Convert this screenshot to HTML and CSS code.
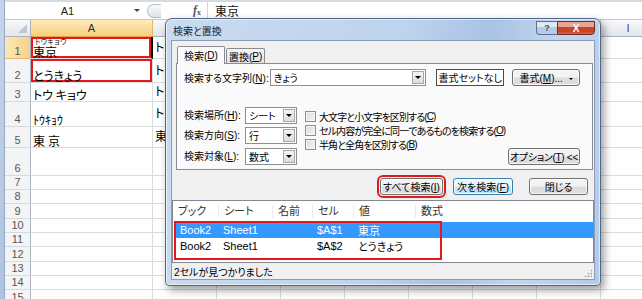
FILE: index.html
```html
<!DOCTYPE html>
<html lang="ja">
  <head>
    <meta charset="UTF-8" />
    <title>検索と置換</title>
    <link rel="stylesheet" href="styles.css">
  </head>
  <body>
    <div class="screen">
      <div class="frame-left"></div>
      <div class="excel">
        <div class="formula-bar">
          <div class="name-box"><span class="name">A1</span><span class="nb-arrow"></span></div>
          <div class="nb-grip"></div>
          <div class="fx"><i>f</i><small>x</small></div>
          <div class="formula">東京</div>
        </div>
        <div class="sheet">
          <div class="corner"></div>
          <div class="ch sel">A</div>
          <div class="ch">B</div>
          <div class="ch">C</div>
          <div class="ch">D</div>
          <div class="ch">E</div>
          <div class="ch">F</div>
          <div class="ch">G</div>
          <div class="ch">H</div>
          <div class="ch">I</div>

          <div class="rh sel">1</div>
          <div class="cell a active mark"><span class="kana">トウキョウ</span>東京</div>
          <div class="cell b">トウキョウ</div>
          <div class="rest"></div>

          <div class="rh">2</div>
          <div class="cell a mark">とうきょう</div>
          <div class="cell b">トウキョウ</div>
          <div class="rest"></div>

          <div class="rh">3</div>
          <div class="cell a">トウ キョウ</div>
          <div class="cell b">トウ キョウ</div>
          <div class="rest"></div>

          <div class="rh">4</div>
          <div class="cell a">ﾄｳｷｮｳ</div>
          <div class="cell b">トウキョウ</div>
          <div class="rest"></div>

          <div class="rh">5</div>
          <div class="cell a spaced">東京</div>
          <div class="cell b">東京</div>
          <div class="rest"></div>

          <div class="rh">6</div><div class="cell"></div><div class="cell"></div><div class="rest"></div>
          <div class="rh">7</div><div class="cell"></div><div class="cell"></div><div class="rest"></div>
          <div class="rh">8</div><div class="cell"></div><div class="cell"></div><div class="rest"></div>
          <div class="rh">9</div><div class="cell"></div><div class="cell"></div><div class="rest"></div>
          <div class="rh">10</div><div class="cell"></div><div class="cell"></div><div class="rest"></div>
          <div class="rh">11</div><div class="cell"></div><div class="cell"></div><div class="rest"></div>
          <div class="rh">12</div><div class="cell"></div><div class="cell"></div><div class="rest"></div>
          <div class="rh">13</div><div class="cell"></div><div class="cell"></div><div class="rest"></div>
          <div class="rh">14</div><div class="cell"></div><div class="cell"></div><div class="rest"></div>
          <div class="rh">15</div><div class="cell"></div><div class="cell"></div><div class="rest"></div>
        </div>
      </div>

      <div class="dialog">
        <div class="titlebar">
          <span class="title">検索と置換</span>
          <div class="caption-btns">
            <span class="help">?</span>
            <span class="close">X</span>
          </div>
        </div>
        <div class="client">
          <div class="tabs">
            <span class="tab active">検索(<u>D</u>)</span>
            <span class="tab">置換(<u>P</u>)</span>
          </div>
          <div class="panel">
            <div class="find-row">
              <label class="find-label">検索する文字列(<u>N</u>):</label>
              <div class="combo wide"><span class="value">きょう</span><b class="drop"></b></div>
              <div class="preview">書式セットなし</div>
              <button class="btn fmt">書式(<u>M</u>)... <span class="caret"></span></button>
            </div>
            <div class="opts">
              <div class="selects">
                <div class="sel-row">
                  <label>検索場所(<u>H</u>):</label>
                  <div class="combo"><span class="value">シート</span><b class="drop"></b></div>
                </div>
                <div class="sel-row">
                  <label>検索方向(<u>S</u>):</label>
                  <div class="combo"><span class="value">行</span><b class="drop"></b></div>
                </div>
                <div class="sel-row">
                  <label>検索対象(<u>L</u>):</label>
                  <div class="combo"><span class="value">数式</span><b class="drop"></b></div>
                </div>
              </div>
              <div class="checks">
                <label class="check"><i></i>大文字と小文字を区別する(<u>C</u>)</label>
                <label class="check"><i></i>セル内容が完全に同一であるものを検索する(<u>O</u>)</label>
                <label class="check"><i></i>半角と全角を区別する(<u>B</u>)</label>
              </div>
              <button class="btn options">オプション(<u>T</u>) &lt;&lt;</button>
            </div>
          </div>
          <div class="actions">
            <button class="btn find-all">すべて検索(<u>I</u>)</button>
            <button class="btn default find-next">次を検索(<u>F</u>)</button>
            <button class="btn close-btn">閉じる</button>
          </div>
          <div class="results">
            <div class="res-head">
              <span>ブック</span><span>シート</span><span>名前</span><span>セル</span><span>値</span><span>数式</span>
            </div>
            <div class="res-row selected">
              <span>Book2</span><span>Sheet1</span><span></span><span>$A$1</span><span>東京</span><span></span>
            </div>
            <div class="res-row">
              <span>Book2</span><span>Sheet1</span><span></span><span>$A$2</span><span>とうきょう</span><span></span>
            </div>
            <div class="res-mark"></div>
          </div>
          <div class="status">2セルが見つかりました<span class="grip"></span></div>
        </div>
      </div>
    </div>
  </body>
</html>
```

FILE: styles.css
```css
* {
  box-sizing: border-box;
}
body {
  margin: 0;
  width: 642px;
  height: 299px;
  overflow: hidden;
  background: #fff;
  font-family: "Liberation Sans", "Noto Sans CJK JP", sans-serif;
  font-feature-settings: "palt";
}
.screen {
  position: relative;
  display: flex;
  width: 642px;
  height: 299px;
  overflow: hidden;
}
.frame-left {
  width: 5px;
  flex: none;
  background: linear-gradient(#c6d5e9, #aec3de);
  border-right: 1px solid #94aac8;
}
.excel {
  flex: 1;
  min-width: 0;
  display: flex;
  flex-direction: column;
}

/* formula bar */
.formula-bar {
  height: 20px;
  flex: none;
  display: flex;
  align-items: center;
  background: #fff;
  border-top: 2px solid #d5dbe3;
  border-bottom: 1px solid #c2c9d2;
  font-size: 11px;
}
.name-box {
  width: 140px;
  height: 100%;
  display: flex;
  align-items: center;
}
.name {
  flex: 1;
  text-align: center;
  color: #222;
}
.nb-arrow {
  width: 0;
  height: 0;
  margin: 0 5px 0 4px;
  border-left: 3px solid transparent;
  border-right: 3px solid transparent;
  border-top: 3px solid #444;
}
.nb-grip {
  width: 14px;
  height: 14px;
  margin-left: 2px;
  border: 1px solid #b4bcc7;
  border-right: none;
  border-radius: 7px 0 0 7px;
  background: linear-gradient(#fafbfc, #dde2e8);
}
.fx {
  margin-left: 32px;
  width: 15px;
  height: 100%;
  display: flex;
  align-items: center;
  font-family: "Liberation Serif", serif;
  font-weight: bold;
  font-size: 12px;
  color: #555;
  border-right: 1px solid #d0d5dc;
}
.fx small {
  font-size: 8px;
  margin-top: 4px;
}
.formula {
  padding-left: 7px;
  font-family: "Noto Sans CJK JP", sans-serif;
  font-size: 12px;
  color: #111;
}

/* sheet */
.sheet {
  display: grid;
  grid-template-columns: 26px 122px repeat(7, 64px) 55px;
  grid-template-rows: 17px 22px 24px 19px 25px 21px 28px 14px 14px 15px 14px 14px 15px 14px 14px 15px;
  font-size: 12px;
}
.corner {
  position: relative;
  background: linear-gradient(#f7f8fa, #e4e7eb);
  border-right: 1px solid #a9b3c0;
  border-bottom: 1px solid #a9b3c0;
}
.corner::after {
  content: "";
  position: absolute;
  right: 3px;
  bottom: 3px;
  border-left: 9px solid transparent;
  border-bottom: 9px solid #c2c8d0;
}
.ch {
  display: flex;
  align-items: center;
  justify-content: center;
  background: linear-gradient(#f8f9fb, #e3e6ea);
  border-right: 1px solid #c6ccd4;
  border-bottom: 1px solid #a9b3c0;
  color: #4d4d4d;
  font-size: 11px;
}
.ch.sel {
  background: linear-gradient(#fdebbd, #f8cf7c);
  border-right-color: #e4b666;
  border-bottom-color: #e2a446;
  color: #333;
}
.rh {
  display: flex;
  align-items: flex-end;
  justify-content: center;
  padding-bottom: 0;
  background: #f3f4f6;
  border-right: 1px solid #a9b3c0;
  border-bottom: 1px solid #d6dade;
  color: #595959;
  font-size: 11px;
  line-height: 13px;
}
.rh.sel {
  background: linear-gradient(to right, #fde7b6, #f8d28a);
  border-bottom-color: #e6b86a;
}
.cell {
  display: flex;
  flex-direction: column;
  justify-content: flex-end;
  padding: 0 2px 0;
  border-right: 1px solid #dadcdd;
  border-bottom: 1px solid #dadcdd;
  font-family: "Noto Sans CJK JP", sans-serif;
  line-height: 13px;
  white-space: nowrap;
  overflow: hidden;
  color: #000;
}
.cell.b {
  justify-content: center;
  padding-bottom: 3px;
}
.cell.spaced {
  letter-spacing: 3px;
}
.kana {
  padding-left: 1px;
  font-size: 7px;
  line-height: 7px;
  font-feature-settings: normal;
  letter-spacing: -0.5px;
}
.cell.mark {
  box-shadow: inset 0 0 0 2px #e5191b;
}
.cell.active {
  border-right: 2px solid #000;
}
.rest {
  grid-column: 4 / -1;
  border-bottom: 1px solid #dadcdd;
  background: repeating-linear-gradient(to right, transparent 0 63px, #dadcdd 63px 64px);
}

/* dialog */
.dialog {
  position: absolute;
  left: 165px;
  top: 18px;
  width: 436px;
  height: 268px;
  display: flex;
  flex-direction: column;
  padding: 0 5px 5px;
  border: 1px solid #53698a;
  border-radius: 7px 7px 4px 4px;
  background: linear-gradient(100deg, #c9dbef 0%, #bed3ed 50%, #a9c3e5 68%, #c1d5ee 82%, #b3cbe9 100%);
  box-shadow: 3px 4px 8px rgba(0, 0, 0, 0.4), inset 0 0 0 1px rgba(255, 255, 255, 0.55);
  font-family: "Liberation Sans", "Noto Sans CJK JP", sans-serif;
  font-size: 10px;
  color: #000;
}
.titlebar {
  height: 21px;
  flex: none;
  display: flex;
  align-items: flex-start;
}
.title {
  padding: 8px 0 0 2px;
  line-height: 10px;
  color: #10243c;
}
.caption-btns {
  margin-left: auto;
  margin-top: 2px;
  display: flex;
}
.help,
.close {
  height: 14px;
  display: flex;
  align-items: center;
  justify-content: center;
  font-weight: bold;
  font-size: 9px;
}
.help {
  width: 21px;
  border: 1px solid #5c708f;
  border-right: none;
  border-radius: 0 0 0 4px;
  background: linear-gradient(#dfe9f5 0 45%, #b6cbe6 45% 100%);
  color: #3d4f68;
}
.close {
  width: 38px;
  border: 1px solid #6f2d22;
  border-radius: 0 0 4px 0;
  background: linear-gradient(#e7a694 0 45%, #c8452a 45% 80%, #d46a4e 100%);
  color: #fff;
  font-size: 10px;
}
.client {
  flex: 1;
  display: flex;
  flex-direction: column;
  background: #f0f0f0;
  border: 1px solid #8b9cb5;
}
.tabs {
  position: relative;
  z-index: 1;
  height: 17px;
  margin: 5px 0 0 5px;
  display: flex;
  align-items: flex-end;
  gap: 1px;
}
.tab {
  height: 15px;
  padding: 0 2px;
  display: flex;
  align-items: center;
  border: 1px solid #898c95;
  border-bottom: none;
  border-radius: 2px 2px 0 0;
  background: linear-gradient(#f5f5f5, #e1e1e1);
}
.tab.active {
  height: 18px;
  margin-bottom: -1px;
  padding: 0 6px;
  background: #fafafa;
}
.panel {
  height: 107px;
  margin: 0 1px 0 4px;
  padding: 5px 12px 0 7px;
  border: 1px solid #898c95;
  background: #fafafa;
}
.find-row {
  height: 17px;
  display: flex;
  align-items: center;
}
.find-label {
  width: 86px;
  white-space: nowrap;
}
.combo {
  height: 17px;
  display: flex;
  align-items: center;
  border: 1px solid #8e8f8f;
  background: #fff;
}
.combo .value {
  flex: 1;
  padding-left: 3px;
}
.combo.wide {
  width: 157px;
}
.drop {
  width: 12px;
  height: 13px;
  margin-right: 1px;
  display: flex;
  align-items: center;
  justify-content: center;
  border: 1px solid #a7a7a7;
  background: linear-gradient(#f4f4f4, #dcdcdc);
}
.drop::after {
  content: "";
  border-left: 3px solid transparent;
  border-right: 3px solid transparent;
  border-top: 3px solid #000;
}
.preview {
  width: 68px;
  height: 17px;
  margin-left: 10px;
  display: flex;
  align-items: center;
  justify-content: center;
  border: 1px solid #4a4a4a;
  background: #fff;
  white-space: nowrap;
}
.btn {
  height: 17px;
  padding: 0;
  font: inherit;
  color: #000;
  white-space: nowrap;
  border: 1px solid #707070;
  border-radius: 3px;
  background: linear-gradient(#f3f3f3 0 48%, #dddddd 52% 100%);
  box-shadow: inset 0 0 0 1px rgba(255, 255, 255, 0.7);
}
.btn.fmt {
  width: 68px;
  margin-left: 8px;
}
.caret {
  display: inline-block;
  margin-left: 3px;
  vertical-align: middle;
  border-left: 2px solid transparent;
  border-right: 2px solid transparent;
  border-top: 2px solid #000;
}
.opts {
  height: 61px;
  margin-top: 21px;
  display: flex;
}
.selects {
  display: flex;
  flex-direction: column;
}
.sel-row {
  height: 20.5px;
  display: flex;
  align-items: flex-start;
}
.sel-row label {
  width: 61px;
  line-height: 17px;
  white-space: nowrap;
}
.sel-row .combo {
  width: 52px;
}
.checks {
  margin-left: 8px;
  padding-top: 2px;
  display: flex;
  flex-direction: column;
}
.check {
  height: 14px;
  display: flex;
  align-items: center;
  white-space: nowrap;
  letter-spacing: -0.9px;
}
.check i {
  width: 11px;
  height: 11px;
  margin-right: 3px;
  border: 1px solid #8f8f8f;
  background: linear-gradient(135deg, #d9d9d9, #f8f8f8);
  box-shadow: inset 0 0 0 1px #f4f4f4;
}
.btn.options {
  width: 72px;
  margin-left: auto;
  align-self: flex-end;
  margin-bottom: 3px;
  letter-spacing: -0.3px;
}
.actions {
  height: 17px;
  margin-top: 8px;
  padding-right: 6px;
  display: flex;
  justify-content: flex-end;
}
.find-all {
  width: 63px;
  outline: 2px solid #e5191b;
  outline-offset: 1px;
}
.find-next {
  width: 60px;
  margin-left: 10px;
}
.btn.default {
  border-color: #3c7fb1;
  background: linear-gradient(#eaf6fd 0 48%, #c6e6f8 52% 100%);
}
.close-btn {
  width: 59px;
  margin-left: 16px;
}
.results {
  position: relative;
  height: 63px;
  margin-top: 5px;
  border: 1px solid #828790;
  background: #fff;
  font-size: 11px;
}
.res-head,
.res-row {
  display: grid;
  grid-template-columns: 45px 54px 40px 41px 62px 1fr;
  white-space: nowrap;
}
.res-head {
  height: 21px;
  align-items: center;
  color: #333;
}
.res-head span {
  padding-left: 5px;
  border-left: 1px solid #ebebeb;
  line-height: 13px;
}
.res-head span:first-child {
  border-left: none;
}
.res-row {
  height: 16px;
  margin-left: 2px;
  align-items: center;
  grid-template-columns: 43px 54px 40px 41px 62px 1fr;
}
.res-row span {
  padding-left: 5px;
}
.res-row.selected {
  background: #3399ff;
  color: #fff;
}
.res-mark {
  position: absolute;
  left: 1px;
  top: 20px;
  width: 268px;
  height: 39px;
  border: 2px solid #e5191b;
}
.status {
  flex: 1;
  position: relative;
  display: flex;
  align-items: center;
  padding-left: 2px;
}
.grip {
  position: absolute;
  right: 2px;
  bottom: 2px;
  width: 8px;
  height: 8px;
  background: radial-gradient(circle, #a8a8a8 0.8px, transparent 1.2px) 0 0 / 3px 3px;
  clip-path: polygon(100% 0, 100% 100%, 0 100%);
}
```
